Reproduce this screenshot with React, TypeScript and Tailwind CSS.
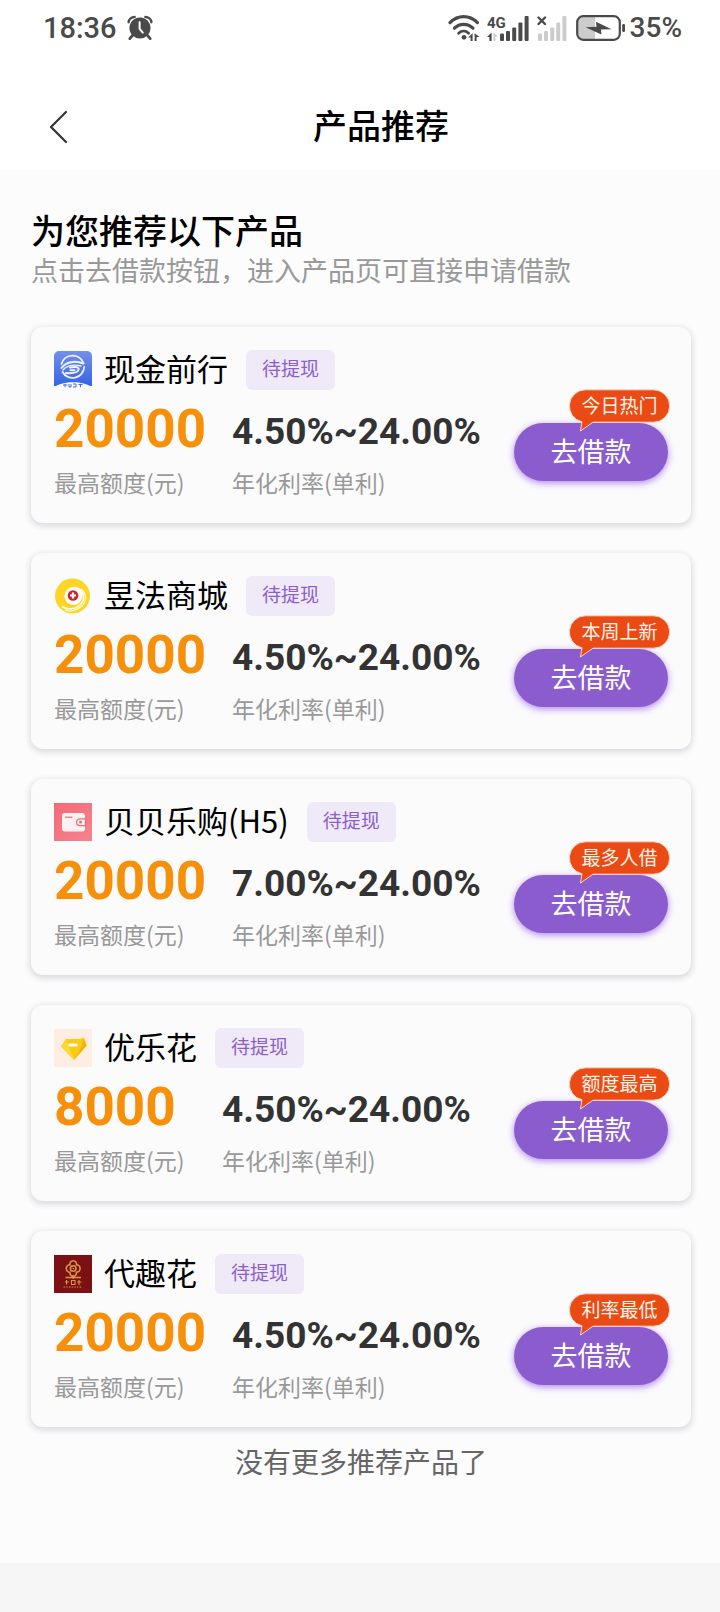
import type { ReactNode } from "react";

type Product = {
  name: string;
  logo: ReactNode;
  amount: string;
  rate: string;
  tag: string;
};

const AlarmIcon = () => (
  <svg viewBox="0 0 26 26" className="h-[26px] w-[26px]" fill="none">
    <circle cx="13" cy="13" r="10.6" fill="#4a4a4a" />
    <path d="M1.6 7.2A6 6 0 0 1 7.6 2M24.4 7.2A6 6 0 0 0 18.4 2" stroke="#4a4a4a" strokeWidth="2.4" strokeLinecap="round" />
    <path d="M5.4 20.6l-2.6 3M20.6 20.6l2.6 3" stroke="#4a4a4a" strokeWidth="2.8" strokeLinecap="round" />
    <path d="M12.6 7.2v6.6l3.2 3.8" stroke="#fff" strokeWidth="2" strokeLinecap="round" strokeLinejoin="round" />
  </svg>
);

const WifiIcon = () => (
  <svg viewBox="0 0 32 26" className="h-[26px] w-8" fill="none" stroke="#4a4a4a" strokeLinecap="round">
    <path d="M2 7.6C10-.4 21.4-.4 29.4 7.6" strokeWidth="3.2" />
    <path d="M6.4 13.2c5.4-5.2 13.2-5.2 18.6 0" strokeWidth="3.2" />
    <path d="M10.6 18.2c3-2.8 7-2.8 10 0" strokeWidth="2.8" />
    <circle cx="16" cy="22.3" r="2.4" fill="#4a4a4a" stroke="none" />
    <path d="M20 22.6l4.6-4.4V26h-2v-3.400zM26.600 18.200l5 3.800h-3v4h-2z" fill="#4a4a4a" stroke="none" />
  </svg>
);

const SignalIcon = () => (
  <svg viewBox="0 0 43 27" className="h-[27px] w-[43px]">
    <text x="0" y="13" fill="#4a4a4a" className="font-[Roboto] text-[15px] font-bold">
      4G
    </text>
    <path d="M0 22l4.600-4.500V26H2.400v-4z" fill="#4a4a4a" />
    <path d="M6.500 17.500l4.500 4H8.400v4.500H6.500z" fill="#ccc" />
    <g fill="#4a4a4a">
      <rect x="13" y="18.5" width="4" height="7.5" rx="1" />
      <rect x="19" y="16" width="4" height="10" rx="1" />
      <rect x="25.2" y="12.5" width="4" height="13.5" rx="1" />
      <rect x="31.4" y="7.5" width="4" height="18.5" rx="1" />
      <rect x="37.6" y="1" width="4" height="25" rx="1" />
    </g>
  </svg>
);

const NoSignalIcon = () => (
  <svg viewBox="0 0 31 27" className="h-[27px] w-[31px]">
    <g fill="#ccc">
      <rect x="1" y="18.5" width="4" height="7.5" rx="1" />
      <rect x="7" y="16" width="4" height="10" rx="1" />
      <rect x="13.2" y="12.5" width="4" height="13.5" rx="1" />
      <rect x="19.2" y="7.5" width="4" height="18.5" rx="1" />
      <rect x="25.4" y="1" width="4" height="25" rx="1" />
    </g>
    <path d="M1.500 2.500l6.500 6.500M8 2.500L1.500 9" stroke="#4a4a4a" strokeWidth="2.4" strokeLinecap="round" />
  </svg>
);

const BatteryIcon = () => (
  <svg viewBox="0 0 50 26" className="h-[26px] w-[50px]">
    <path d="M7 2h12v22H7a5 5 0 0 1-5-5V7a5 5 0 0 1 5-5z" fill="#ccc" />
    <rect x="1.2" y="1.2" width="42.6" height="23.6" rx="6" fill="none" stroke="#4a4a4a" strokeWidth="2.2" />
    <rect x="46.2" y="9" width="2.8" height="8" rx="1.2" fill="#4a4a4a" />
    <path d="M9.500 12.300L20.500 11.800 20 6.800 35.500 14.200 25 14.400 25.400 19.600z" fill="#4a4a4a" />
  </svg>
);

const CashLogo = () => (
  <svg viewBox="0 0 38 38" className="h-[38px] w-[38px]">
    <defs>
      <linearGradient id="cash" x1="0" y1="0" x2="0" y2="1">
        <stop offset="0" stopColor="#7590ea" />
        <stop offset="1" stopColor="#3464e6" />
      </linearGradient>
    </defs>
    <path d="M5 0h28a5 5 0 0 1 5 5v30H0V5a5 5 0 0 1 5-5z" fill="url(#cash)" />
    <path d="M0 38v-2C9 29.500 29 29.500 38 36v2z" fill="#fbfcff" />
    <g fill="none" stroke="#eef3ff" strokeLinecap="round">
      <path d="M7.500 13A11.600 11.600 0 0 1 29.500 12M30.200 16A11.600 11.600 0 0 1 8.500 21" strokeWidth="1.8" />
      <path d="M7.500 17C12 10.500 21 9.500 29.500 12.500" strokeWidth="2" />
      <path d="M9 19c4.500-5 10-6 18-4" strokeWidth="1.4" />
      <path d="M16 16.500c6-1.500 9.500 0 8.500 2.500s-6 3.500-12.500 3M16.500 19.300h4" strokeWidth="2" />
    </g>
    <path d="M9 34h4.500M11 32.800v3.400M15 33v3h2v-3M19 33h3v3h-3M24.500 33.500h4M26.500 32.800v3.400" fill="none" stroke="#4a6fd0" strokeWidth="1" />
  </svg>
);

const MallLogo = () => (
  <svg viewBox="0 0 38 38" className="h-[38px] w-[38px]">
    <circle cx="18.5" cy="19" r="17.5" fill="#fdd526" />
    <path d="M19 10a9 9 0 1 0 8.500 13c2-4.500 1.500-10-3-12.500-2-1-4-1-5.500-.5z" fill="#fffdf4" />
    <path d="M23.500 12c7 2 8 10.500 3 15.500S14 33.500 8 29.500" fill="none" stroke="#fffbe6" strokeWidth="1.6" />
    <path d="M27 12c6.500 5 5.500 13.500-.5 18S15 34.500 11 33" fill="none" stroke="#fffbe6" strokeWidth="1.1" />
    <circle cx="19" cy="18.5" r="5.3" fill="#cb2330" />
    <path d="M19 15.500v6M16 18.500h6" stroke="#fff" strokeWidth="2.2" />
  </svg>
);

const WalletLogo = () => (
  <svg viewBox="0 0 38 38" className="h-[38px] w-[38px]">
    <defs>
      <linearGradient id="wallet" x1="0" y1="0" x2="1" y2="1">
        <stop offset="0" stopColor="#f26a76" />
        <stop offset="1" stopColor="#f58490" />
      </linearGradient>
    </defs>
    <rect width="38" height="38" fill="url(#wallet)" />
    <rect x="8" y="10" width="23" height="18.5" rx="3" fill="#fff1f1" />
    <path d="M31.500 15.800h-5.500a3.400 3.400 0 0 0 0 6.800h5.500z" fill="#fff6f5" stroke="#ef6a76" strokeWidth="1.3" />
    <circle cx="26.5" cy="19.2" r="1.4" fill="#ee5f6c" />
    <path d="M11.500 14.300h6.500" stroke="#e88a90" strokeWidth="1.5" strokeLinecap="round" />
  </svg>
);

const GemLogo = () => (
  <svg viewBox="0 0 38 38" className="h-[38px] w-[38px]">
    <rect width="38" height="38" fill="#fdeee3" />
    <path d="M12 10.500h14l3.500-1.500 3 7.500L20 30.500 7.500 17.500z" fill="#f9cb16" stroke="#f9cb16" strokeLinejoin="round" />
    <path d="M12 10.500L7.500 17.500 20 30.500l-5-12z" fill="#fddb35" />
    <path d="M29.500 9l3 7.500L20 30.500 27.500 18z" fill="#efb50d" />
    <path d="M14.500 16h9" stroke="#fff" strokeWidth="2.8" />
  </svg>
);

const FlowerLogo = () => (
  <svg viewBox="0 0 38 38" className="h-[38px] w-[38px]">
    <rect width="38" height="38" fill="#7b1015" />
    <g fill="none" stroke="#d9964c" strokeWidth="1.6">
      <path d="M16 9.800a3.300 3.300 0 1 1 6.400 0 3.400 3.400 0 1 1 0 7.400 3.300 3.300 0 1 1-6.400 0 3.400 3.400 0 1 1 0-7.400z" />
      <circle cx="19.2" cy="13.5" r="2.8" />
      <circle cx="19.2" cy="13.5" r="0.8" fill="#d9964c" stroke="none" />
      <path d="M19.200 20v4M11.500 22.500h15.500" strokeWidth="1.3" />
      <path d="M12.500 25v4.500M11 27h4M17.500 25.500h3.500v4h-3.500zM25 25v5M23 27h4.500" strokeWidth="1.1" />
      <path d="M9.500 32h19" strokeWidth="1" strokeDasharray="1.5 1.2" />
    </g>
  </svg>
);

const products: Product[] = [
  { name: "现金前行", logo: <CashLogo />, amount: "20000", rate: "4.50%~24.00%", tag: "今日热门" },
  { name: "昱法商城", logo: <MallLogo />, amount: "20000", rate: "4.50%~24.00%", tag: "本周上新" },
  { name: "贝贝乐购(H5)", logo: <WalletLogo />, amount: "20000", rate: "7.00%~24.00%", tag: "最多人借" },
  { name: "优乐花", logo: <GemLogo />, amount: "8000", rate: "4.50%~24.00%", tag: "额度最高" },
  { name: "代趣花", logo: <FlowerLogo />, amount: "20000", rate: "4.50%~24.00%", tag: "利率最低" },
];

const StatusBar = () => (
  <div className="flex h-14 items-center justify-between pr-[38px] pl-[43px] font-[Roboto] text-[#4a4a4a]">
    <div className="flex items-center gap-2.5">
      <span className="text-[29px] leading-8 font-medium">18:36</span>
      <AlarmIcon />
    </div>
    <div className="flex items-center">
      <div className="flex items-center gap-[7px]">
        <WifiIcon />
        <SignalIcon />
        <NoSignalIcon />
      </div>
      <div className="ml-2 flex items-center gap-1">
        <BatteryIcon />
        <span className="text-[28px] leading-8 font-medium">35%</span>
      </div>
    </div>
  </div>
);

const NavBar = () => (
  <header className="flex h-[114px] items-center pt-7 pr-[26px] pl-12">
    <button type="button" aria-label="返回" className="w-5">
      <svg viewBox="0 0 20 34" className="h-[34px] w-5" fill="none">
        <path d="M18 2L3 17l15 15" stroke="#333" strokeWidth="2.2" strokeLinecap="round" strokeLinejoin="round" />
      </svg>
    </button>
    <h1 className="flex-1 pb-1 text-center text-[34px] leading-10 font-medium">产品推荐</h1>
  </header>
);

const Bubble = ({ text }: { text: string }) => (
  <span className="pointer-events-none absolute -top-[34px] -right-0.5 h-[43px] w-[101px]">
    <svg viewBox="0 0 101 43" className="absolute inset-0 h-full w-full">
      <path
        d="M16.500.8h68a16.200 16.200 0 0 1 0 32.400H24L11.500 42l1.500-9.200A16.200 16.200 0 0 1 16.500.8z"
        fill="#ea4b14"
        stroke="#fbd5c8"
        strokeWidth="1"
      />
    </svg>
    <span className="relative block text-center text-[19px] leading-8 text-[#fff3e8]">{text}</span>
  </span>
);

const ProductCard = ({ name, logo, amount, rate, tag }: Product) => (
  <li className="flex items-end justify-between rounded-xl bg-[#fbfbfc] p-[23px] shadow-[0_2px_6px_1px_rgba(30,30,70,0.16)]">
    <div>
      <div className="flex h-10 items-center">
        {logo}
        <h3 className="ml-3 pb-1 text-[31px] leading-9">{name}</h3>
        <span className="ml-[18px] rounded-md bg-[#f0e9f7] px-4 pb-1 text-[19px] leading-9 text-[#8b5fca]">待提现</span>
      </div>
      <div className="mt-2.5 flex">
        <div className="mr-[26px] min-w-[142px]">
          <p className="font-[Roboto] text-[53px] leading-[58px] font-bold text-[#f6900b]">{amount}</p>
          <p className="mt-2 pb-0.5 text-[23px] leading-8 text-[#999]">最高额度(元)</p>
        </div>
        <div>
          <p className="font-[Roboto] text-[37px] leading-16 font-bold text-[#333]">{rate}</p>
          <p className="mt-0.5 pb-0.5 text-[23px] leading-8 text-[#999]">年化利率(单利)</p>
        </div>
      </div>
    </div>
    <div className="relative mb-[19px]">
      <button
        type="button"
        className="block h-[58px] w-[154px] rounded-full bg-[#8a5ccd] pb-0.5 text-[27px] leading-10 text-white shadow-[0_2px_7px_rgba(138,70,230,0.65)]"
      >
        去借款
      </button>
      <Bubble text={tag} />
    </div>
  </li>
);

export default function App() {
  return (
    <div className="min-h-screen bg-[#f6f6f6] font-['Noto_Sans_CJK_SC',sans-serif] text-black">
      <div className="bg-white">
        <StatusBar />
        <NavBar />
      </div>
      <main className="bg-[#fcfcfc] pt-10 pr-[29px] pb-[82px] pl-[31px]">
        <h2 className="text-[34px] leading-10 font-medium">为您推荐以下产品</h2>
        <p className="text-[27px] leading-10 text-[#999]">点击去借款按钮，进入产品页可直接申请借款</p>
        <ul className="mt-[37px] flex flex-col gap-[30px]">
          {products.map((product) => (
            <ProductCard key={product.name} {...product} />
          ))}
        </ul>
        <p className="mt-3.5 text-center text-[28px] leading-10 text-[#666]">没有更多推荐产品了</p>
      </main>
    </div>
  );
}
